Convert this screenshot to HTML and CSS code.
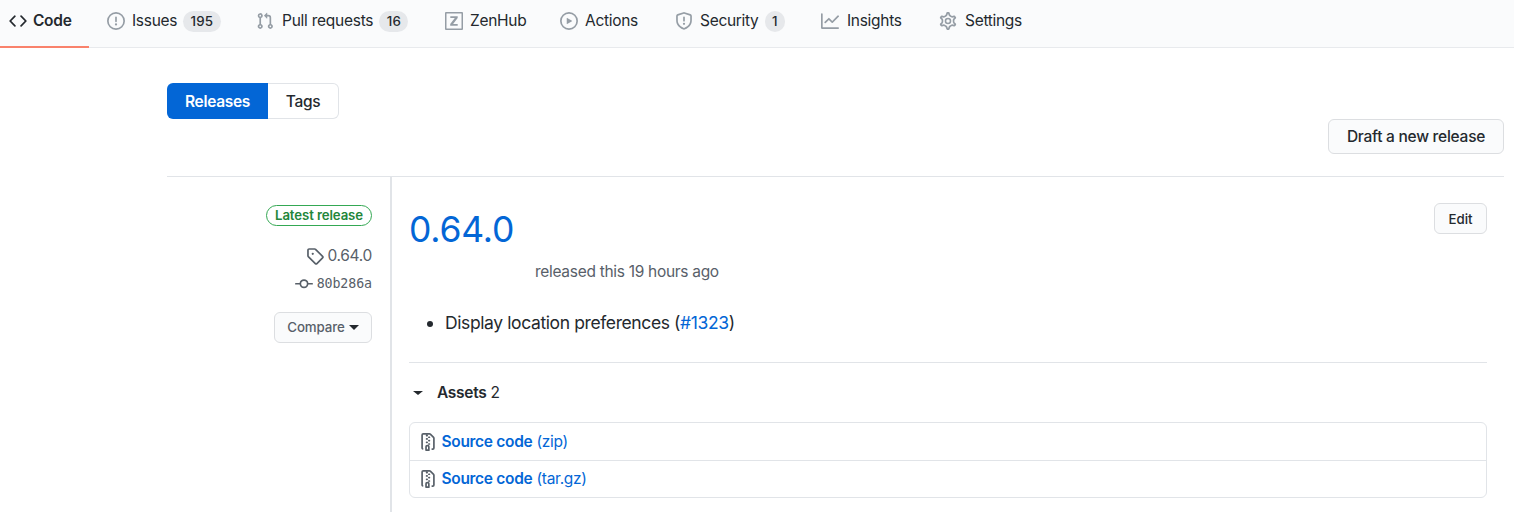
FILE: index.html
```html
<!DOCTYPE html>
<html lang="en">
<head>
<meta charset="utf-8">
<title>Releases</title>
<link rel="stylesheet" href="styles.css">
</head>
<body>
<nav class="nav">
  <a class="tab tab-active"><svg class="icon" viewBox="0 0 16 16"><path d="M4.72 3.22a.75.75 0 011.06 1.06L2.06 8l3.72 3.72a.75.75 0 11-1.06 1.06L.47 8.53a.75.75 0 010-1.06l4.25-4.25zm6.56 0a.75.75 0 10-1.06 1.06L13.94 8l-3.72 3.72a.75.75 0 101.06 1.06l4.25-4.25a.75.75 0 000-1.06l-4.25-4.25z"/></svg><span>Code</span></a>
  <a class="tab"><svg class="icon" viewBox="0 0 16 16"><path d="M8 1.5a6.5 6.5 0 100 13 6.5 6.5 0 000-13zM0 8a8 8 0 1116 0A8 8 0 010 8zm9 3a1 1 0 11-2 0 1 1 0 012 0zm-.25-6.25a.75.75 0 00-1.5 0v3.5a.75.75 0 001.5 0v-3.5z"/></svg><span>Issues</span><span class="count">195</span></a>
  <a class="tab tab-pulls"><svg class="icon" viewBox="0 0 16 16"><path d="M7.177 3.073L9.573.677A.25.25 0 0110 .854v4.792a.25.25 0 01-.427.177L7.177 3.427a.25.25 0 010-.354zM3.75 2.5a.75.75 0 100 1.5.75.75 0 000-1.5zm-2.25.75a2.25 2.25 0 113 2.122v5.256a2.251 2.251 0 11-1.5 0V5.372A2.25 2.25 0 011.5 3.25zM11 2.5h-1V4h1a1 1 0 011 1v5.628a2.251 2.251 0 101.5 0V5A2.5 2.5 0 0011 2.5zm1 10.25a.75.75 0 111.5 0 .75.75 0 01-1.5 0zM3.75 12a.75.75 0 100 1.5.75.75 0 000-1.5z"/></svg><span>Pull requests</span><span class="count">16</span></a>
  <a class="tab tab-zenhub"><svg class="icon" viewBox="0 0 18 18"><path d="M1 0h16a1 1 0 011 1v16a1 1 0 01-1 1H1a1 1 0 01-1-1V1a1 1 0 011-1zm.5 1.5v15h15v-15zM5.3 4.2h7.4v1.7l-4.6 6h4.6v1.9H5.2v-1.7l4.6-6H5.3z"/></svg><span>ZenHub</span></a>
  <a class="tab"><svg class="icon" viewBox="0 0 16 16"><path d="M1.5 8a6.5 6.5 0 1113 0 6.5 6.5 0 01-13 0zM8 0a8 8 0 100 16A8 8 0 008 0zM6.379 5.227A.25.25 0 006 5.442v5.117a.25.25 0 00.379.214l4.264-2.559a.25.25 0 000-.428L6.379 5.227z"/></svg><span>Actions</span></a>
  <a class="tab"><svg class="icon" viewBox="0 0 16 16"><path d="M7.467.133a1.75 1.75 0 011.066 0l5.25 1.68A1.75 1.75 0 0115 3.48V7c0 1.566-.32 3.182-1.303 4.682-.983 1.498-2.585 2.813-5.032 3.855a1.7 1.7 0 01-1.33 0c-2.447-1.042-4.049-2.357-5.032-3.855C1.32 10.182 1 8.566 1 7V3.48a1.75 1.75 0 011.217-1.667l5.25-1.68zm.61 1.429a.25.25 0 00-.153 0l-5.25 1.68a.25.25 0 00-.174.238V7c0 1.358.275 2.666 1.057 3.86.784 1.194 2.121 2.34 4.366 3.297a.2.2 0 00.154 0c2.245-.956 3.582-2.104 4.366-3.298C13.225 9.666 13.5 8.36 13.5 7V3.48a.25.25 0 00-.174-.237l-5.25-1.68zM9 10.5a1 1 0 11-2 0 1 1 0 012 0zm-.25-5.75a.75.75 0 10-1.5 0v3a.75.75 0 001.5 0v-3z"/></svg><span>Security</span><span class="count">1</span></a>
  <a class="tab tab-insights"><svg class="icon" viewBox="0 0 16 16"><path d="M1.5 1.75a.75.75 0 00-1.5 0v12.5c0 .414.336.75.75.75h14.5a.75.75 0 000-1.5H1.5V1.75zm14.28 2.53a.75.75 0 00-1.06-1.06L10 7.94 7.53 5.47a.75.75 0 00-1.06 0L3.22 8.72a.75.75 0 001.06 1.06L7 7.06l2.47 2.47a.75.75 0 001.06 0l5.25-5.25z"/></svg><span>Insights</span></a>
  <a class="tab tab-settings"><svg class="icon icon-gear" viewBox="0 0 16 16"><path transform="translate(-.8 -.8) scale(1.1)" d="M7.429 1.525a6.593 6.593 0 011.142 0c.036.003.108.036.137.146l.289 1.105c.147.56.55.967.997 1.189.174.086.341.183.501.29.417.278.97.423 1.53.27l1.102-.303c.11-.03.175.016.195.046.219.31.41.641.573.989.014.031.022.11-.059.19l-.815.806c-.411.406-.562.957-.53 1.456a4.588 4.588 0 010 .582c-.032.499.119 1.05.53 1.456l.815.806c.08.08.073.159.059.19a6.494 6.494 0 01-.573.99c-.02.029-.086.074-.195.045l-1.103-.303c-.559-.153-1.112-.008-1.529.27-.16.107-.327.204-.5.29-.449.222-.851.628-.998 1.189l-.289 1.105c-.029.11-.101.143-.137.146a6.613 6.613 0 01-1.142 0c-.036-.003-.108-.037-.137-.146l-.289-1.105c-.147-.56-.55-.967-.997-1.189a4.502 4.502 0 01-.501-.29c-.417-.278-.97-.423-1.53-.27l-1.102.303c-.11.03-.175-.016-.195-.046a6.492 6.492 0 01-.573-.989c-.014-.031-.022-.11.059-.19l.815-.806c.411-.406.562-.957.53-1.456a4.587 4.587 0 010-.582c.032-.499-.119-1.05-.53-1.456l-.815-.806c-.08-.08-.073-.159-.059-.19a6.44 6.44 0 01.573-.99c.02-.029.086-.075.195-.045l1.103.303c.559.153 1.112.008 1.529-.27.16-.107.327-.204.5-.29.449-.222.851-.628.998-1.189l.289-1.105c.029-.11.101-.143.137-.146z"/><circle cx="8" cy="8" r="2.25"/></svg><span>Settings</span></a>
</nav>
<main class="page">
  <div class="subnav"><a class="subnav-item selected">Releases</a><a class="subnav-item">Tags</a></div>
  <div class="actions"><a class="btn btn-draft">Draft a new release</a></div>
  <section class="release">
    <aside class="meta">
      <span class="label">Latest release</span>
      <span class="meta-row tag"><svg class="icon" viewBox="0 0 16 16"><path d="M2.5 7.775V2.75a.25.25 0 01.25-.25h5.025a.25.25 0 01.177.073l6.25 6.25a.25.25 0 010 .354l-5.025 5.025a.25.25 0 01-.354 0l-6.25-6.25a.25.25 0 01-.073-.177zm-1.5 0V2.75C1 1.784 1.784 1 2.75 1h5.025c.464 0 .91.184 1.238.513l6.25 6.25a1.75 1.75 0 010 2.474l-5.026 5.026a1.75 1.75 0 01-2.474 0l-6.25-6.25A1.75 1.75 0 011 7.775zM6 5a1 1 0 100 2 1 1 0 000-2z"/></svg><span>0.64.0</span></span>
      <span class="meta-row commit"><svg class="icon" viewBox="0 0 16 16"><path d="M10.5 7.75a2.5 2.5 0 11-5 0 2.5 2.5 0 015 0zm1.43.75a4.002 4.002 0 01-7.86 0H.75a.75.75 0 110-1.5h3.32a4.001 4.001 0 017.86 0h3.32a.75.75 0 110 1.5h-3.32z"/></svg><span>80b286a</span></span>
      <a class="btn btn-compare">Compare<i class="caret"></i></a>
    </aside>
    <article class="body">
      <header class="head"><h1 class="title">0.64.0</h1><a class="btn btn-edit">Edit</a></header>
      <p class="byline">released this 19 hours ago</p>
      <ul class="notes"><li class="note">Display location preferences (<a class="link">#1323</a>)</li></ul>
      <div class="assets-head"><i class="caret"></i><span><b>Assets</b> 2</span></div>
      <div class="assets">
        <a class="asset"><svg class="icon" viewBox="0 0 16 16"><path d="M3.5 1.75a.25.25 0 01.25-.25h3a.75.75 0 000 1.5h.5a.75.75 0 000-1.5h2.086a.25.25 0 01.177.073l2.914 2.914a.25.25 0 01.073.177v8.586a.25.25 0 01-.25.25h-.5a.75.75 0 000 1.5h.5A1.75 1.75 0 0014 13.25V4.664c0-.464-.184-.909-.513-1.237L10.573.513A1.75 1.75 0 009.336 0H3.75A1.75 1.75 0 002 1.75v11.5c0 .649.353 1.214.874 1.515a.75.75 0 10.752-1.298.25.25 0 01-.126-.217V1.75zM8.75 3a.75.75 0 000 1.5h.5a.75.75 0 000-1.5h-.5zM6 5.25a.75.75 0 01.75-.75h.5a.75.75 0 010 1.5h-.5A.75.75 0 016 5.25zm2 1.5A.75.75 0 018.75 6h.5a.75.75 0 010 1.5h-.5A.75.75 0 018 6.75zm-1.25.75a.75.75 0 000 1.5h.5a.75.75 0 000-1.5h-.5zM8 9.75A.75.75 0 018.75 9h.5a.75.75 0 010 1.5h-.5A.75.75 0 018 9.75zm-.75.75a1.75 1.75 0 00-1.75 1.75v3c0 .414.336.75.75.75h2.5a.75.75 0 00.75-.75v-3a1.75 1.75 0 00-1.75-1.75h-.5zM7 12.25a.25.25 0 01.25-.25h.5a.25.25 0 01.25.25v2.25H7v-2.25z"/></svg><span><b>Source code</b> (zip)</span></a>
        <a class="asset"><svg class="icon" viewBox="0 0 16 16"><path d="M3.5 1.75a.25.25 0 01.25-.25h3a.75.75 0 000 1.5h.5a.75.75 0 000-1.5h2.086a.25.25 0 01.177.073l2.914 2.914a.25.25 0 01.073.177v8.586a.25.25 0 01-.25.25h-.5a.75.75 0 000 1.5h.5A1.75 1.75 0 0014 13.25V4.664c0-.464-.184-.909-.513-1.237L10.573.513A1.75 1.75 0 009.336 0H3.75A1.75 1.75 0 002 1.75v11.5c0 .649.353 1.214.874 1.515a.75.75 0 10.752-1.298.25.25 0 01-.126-.217V1.75zM8.75 3a.75.75 0 000 1.5h.5a.75.75 0 000-1.5h-.5zM6 5.25a.75.75 0 01.75-.75h.5a.75.75 0 010 1.5h-.5A.75.75 0 016 5.25zm2 1.5A.75.75 0 018.75 6h.5a.75.75 0 010 1.5h-.5A.75.75 0 018 6.75zm-1.25.75a.75.75 0 000 1.5h.5a.75.75 0 000-1.5h-.5zM8 9.75A.75.75 0 018.75 9h.5a.75.75 0 010 1.5h-.5A.75.75 0 018 9.75zm-.75.75a1.75 1.75 0 00-1.75 1.75v3c0 .414.336.75.75.75h2.5a.75.75 0 00.75-.75v-3a1.75 1.75 0 00-1.75-1.75h-.5zM7 12.25a.25.25 0 01.25-.25h.5a.25.25 0 01.25.25v2.25H7v-2.25z"/></svg><span><b>Source code</b> (tar.gz)</span></a>
      </div>
    </article>
  </section>
</main>
</body>
</html>
```

FILE: styles.css
```css
* { box-sizing: border-box; }
body {
  margin: 0;
  height: 512px;
  overflow: hidden;
  background: #fff;
  color: #24292e;
  font: 15.5px/24px Inter, "Liberation Sans", sans-serif;
  letter-spacing: -0.3px;
}
b { font-weight: 600; }
.icon { width: 18px; height: 18px; flex: none; fill: currentColor; fill-rule: evenodd; }
.nav {
  display: grid;
  grid-template-columns: 98px 149px 189px 115px 115px 146px 118px 1fr;
  height: 48px;
  background: #fafbfc;
  border-bottom: 1px solid #e8eaed;
}
.tab {
  display: flex;
  align-items: center;
  height: 48px;
  padding: 0 0 6px 9px;
  white-space: nowrap;
}
.tab .icon { margin-right: 7px; color: #959da5; }
.tab .icon-gear { fill: none; stroke: currentColor; stroke-width: 1.4; }
.tab-active { width: 89px; padding-bottom: 4px; border-bottom: 2px solid #f9826c; font-weight: 600; }
.tab-active .icon { margin-right: 6px; color: #24292e; }
.tab-pulls .icon, .tab-insights .icon, .tab-settings .icon { margin-right: 8px; }
.tab-pulls { letter-spacing: -0.25px; }
.count {
  height: 21px;
  margin-left: 6px;
  padding: 0 7.5px;
  border-radius: 11px;
  background: #e6e8eb;
  font-size: 13.3px;
  font-weight: 500;
  line-height: 21px;
  letter-spacing: 0.1px;
}
.page { margin-left: 167px; width: 1337px; }
.subnav { display: flex; width: 172px; height: 36px; margin-top: 35px; font-weight: 500; line-height: 36px; text-align: center; }
.subnav-item { flex: 1; border: 1px solid #e1e4e8; border-left: 0; border-radius: 0 6px 6px 0; line-height: 35px; }
.selected { flex: 0 0 101px; border: 0; border-radius: 6px 0 0 6px; background: #0366d6; color: #fff; font-weight: 600; line-height: 37px; }
.actions { display: flex; justify-content: flex-end; height: 57px; }
.btn {
  display: flex;
  align-items: center;
  justify-content: center;
  border: 1px solid #dcdee1;
  border-radius: 6px;
  background: #fafbfc;
  font-weight: 500;
  white-space: nowrap;
}
.btn-draft { width: 176px; height: 35px; letter-spacing: -0.25px; }
.release { display: flex; height: 336px; border-top: 1px solid #e1e4e8; }
.meta {
  display: flex;
  flex-direction: column;
  align-items: flex-end;
  width: 225px;
  padding: 28px 18px 0 0;
  border-right: 2px solid #e1e4e8;
  color: #586069;
}
.label {
  width: 106px;
  height: 21px;
  border: 1px solid #34a853;
  border-radius: 11px;
  color: #22863a;
  font-size: 13.2px;
  font-weight: 600;
  line-height: 19px;
  letter-spacing: -0.1px;
  text-align: center;
}
.meta-row { display: flex; align-items: center; }
.tag { margin-top: 18px; }
.tag .icon { margin-right: 3px; }
.commit { margin-top: 4px; font: 13.3px/24px "DejaVu Sans Mono", monospace; letter-spacing: -0.1px; }
.commit .icon { margin-right: 4px; }
.btn-compare { width: 98px; height: 31px; margin-top: 16px; padding-bottom: 1px; font-size: 13.3px; letter-spacing: -0.1px; }
.caret { width: 0; height: 0; border: 4.5px solid transparent; border-top-color: #24292e; border-bottom: 0; }
.btn-compare .caret { margin: 1px 0 0 4px; border-width: 5px 5px 0; }
.body { flex: 1; padding: 26px 17px 0 17px; }
.head { display: flex; justify-content: space-between; height: 56px; }
.title { margin: 0; color: #0366d6; font-size: 35.5px; font-weight: 400; line-height: 54px; letter-spacing: -0.2px; }
.btn-edit { width: 53px; height: 31px; font-size: 13.3px; letter-spacing: 0; }
.byline { margin: 0 0 0 126px; padding-top: 1px; color: #586069; }
.notes { height: 79px; margin: 0; padding: 25px 0 0 36px; border-bottom: 1px solid #e1e4e8; font-size: 17.5px; line-height: 27px; letter-spacing: -0.39px; }
.link { color: #0366d6; }
.assets-head { display: flex; align-items: center; height: 59px; padding-left: 4px; }
.assets-head .caret { margin-right: 14px; border-width: 4.5px 5px 0; }
.assets { border: 1px solid #e1e4e8; border-radius: 6px; }
.asset { display: flex; align-items: center; height: 36px; padding-left: 9px; color: #0366d6; }
.asset:first-child { height: 38px; border-bottom: 1px solid #e1e4e8; }
.asset .icon { margin-right: 4.5px; color: #586069; }
```
